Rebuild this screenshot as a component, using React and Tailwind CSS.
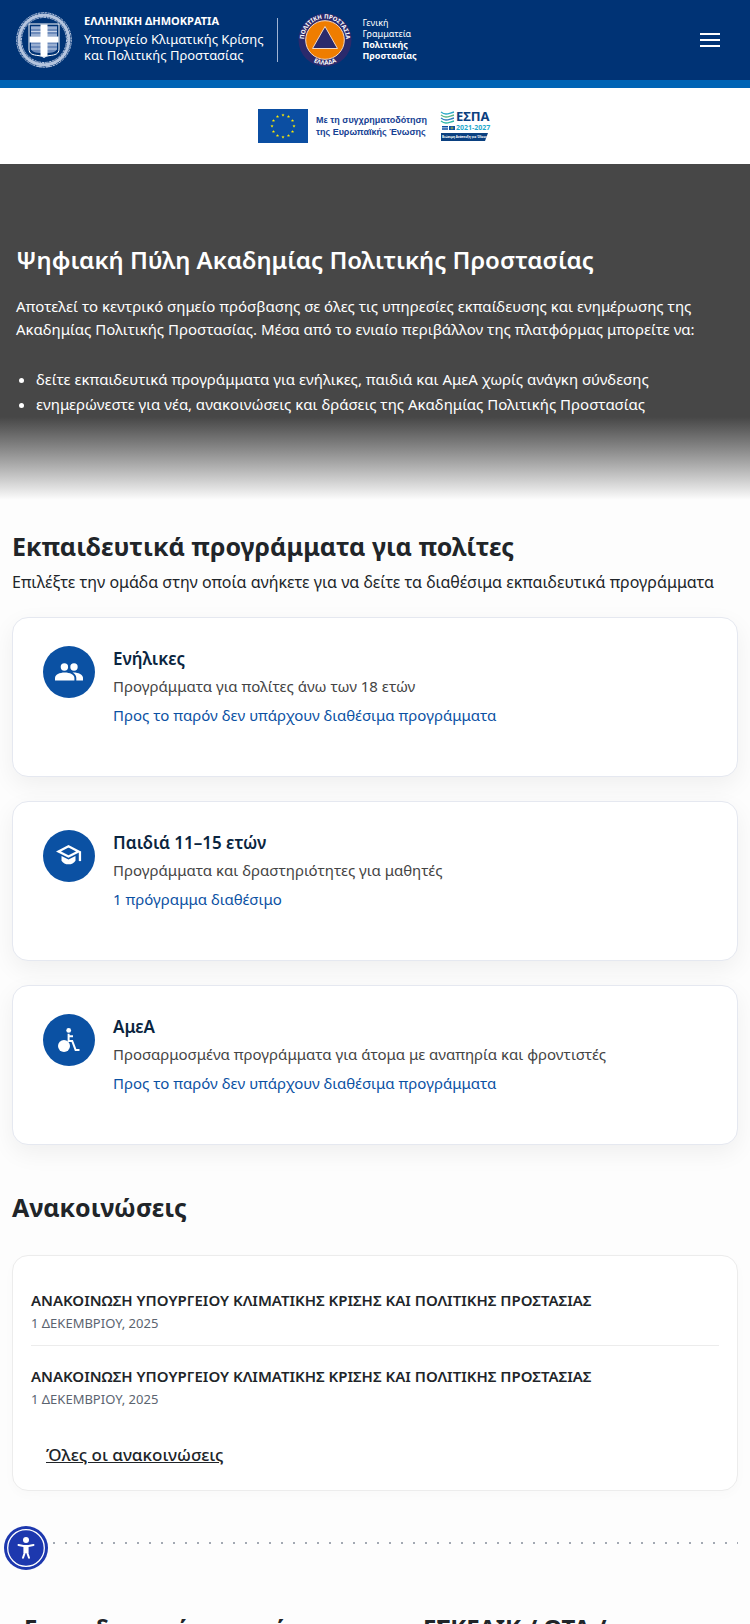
import { useState } from "react"

const groups = [
    { title: "Ενήλικες", text: "Προγράμματα για πολίτες άνω των 18 ετών", link: "Προς το παρόν δεν υπάρχουν διαθέσιμα προγράμματα", icon: <PeopleIcon /> },
    { title: "Παιδιά 11–15 ετών", text: "Προγράμματα και δραστηριότητες για μαθητές", link: "1 πρόγραμμα διαθέσιμο", icon: <SchoolIcon /> },
    { title: "ΑμεΑ", text: "Προσαρμοσμένα προγράμματα για άτομα με αναπηρία και φροντιστές", link: "Προς το παρόν δεν υπάρχουν διαθέσιμα προγράμματα", icon: <WheelchairIcon /> },
]

const news = [
    { id: 1, title: "ΑΝΑΚΟΙΝΩΣΗ ΥΠΟΥΡΓΕΙΟΥ ΚΛΙΜΑΤΙΚΗΣ ΚΡΙΣΗΣ ΚΑΙ ΠΟΛΙΤΙΚΗΣ ΠΡΟΣΤΑΣΙΑΣ", date: "1 ΔΕΚΕΜΒΡΙΟΥ, 2025" },
    { id: 2, title: "ΑΝΑΚΟΙΝΩΣΗ ΥΠΟΥΡΓΕΙΟΥ ΚΛΙΜΑΤΙΚΗΣ ΚΡΙΣΗΣ ΚΑΙ ΠΟΛΙΤΙΚΗΣ ΠΡΟΣΤΑΣΙΑΣ", date: "1 ΔΕΚΕΜΒΡΙΟΥ, 2025" },
]

function PeopleIcon() {
    return (
        <svg viewBox="0 0 28 18" className="h-[18px] w-7" fill="currentColor" aria-hidden="true">
            <circle cx="9.4" cy="4" r="3.7" />
            <circle cx="19" cy="4" r="3.7" />
            <path d="M0 17.5V15c0-3.2 4.5-5.4 9.7-5.400s9.7 2.200 9.7 5.400v2.500z" />
            <path d="M17.5 9.600C23 9.300 28 11.600 28 14.800v2.700h-6.700V15c0-2.200-1.500-4.200-3.800-5.400z" />
        </svg>
    )
}

function SchoolIcon() {
    return (
        <svg viewBox="0 0 26 26" className="size-[26px]" fill="currentColor" aria-hidden="true">
            <path d="M2.5 8.5L12.5 3.2l10 5.3-10 5z" fill="none" stroke="currentColor" strokeWidth="2.3" />
            <path d="M5.5 13l7 3.500 7-3.500v4.700c-1.500 2.500-4 3.600-7 3.600s-5.500-1.100-7-3.600z" />
            <path d="M22.800 8.300h2.300v9.800h-2.300z" />
        </svg>
    )
}

function WheelchairIcon() {
    return (
        <svg viewBox="0 0 22 24" className="h-6 w-[22px]" fill="none" stroke="currentColor" strokeWidth="2" aria-hidden="true">
            <circle cx="10.7" cy="2.4" r="2.4" fill="currentColor" stroke="none" />
            <circle cx="6" cy="18" r="6" fill="currentColor" stroke="none" />
            <path d="M10.6 5.8v8M10.6 8.2H15M9.7 12.9h4.5l3.4 9H21.5" />
        </svg>
    )
}

function Emblem() {
    return (
        <svg viewBox="0 0 56 56" className="size-14 shrink-0" fill="none" aria-hidden="true">
            <g stroke="#b4c4de" strokeLinecap="round">
                <circle cx="28" cy="28" r="24.8" strokeWidth="3.5" strokeDasharray=".6 2.4" />
                <circle cx="28" cy="28" r="27.3" strokeWidth="1" strokeDasharray="2 1.5" />
                <circle cx="28" cy="28" r="22.5" strokeWidth="1" strokeDasharray="2 1.5" />
                <path d="M19 51.5c5-2 9 3 15 3M37 51.5c-5-2-9 3-15 3" strokeWidth="1.2" />
            </g>
            <path d="M13 12h30v25c0 5-4 6-9 6.5-3 .4-4.5 1-6 2-1.5-1-3-1.6-6-2-5-.5-9-1.5-9-6.5z" fill="#003375" stroke="#fff" strokeWidth="1" />
            <path d="M15 14h10v11H15zM31 14h10v11H31zM15 30h10v11c-5 0-10-1-10-5zM31 30h10v6c0 4-5 5-10 5z" fill="#6d8bbb" />
            <path d="M15 16h10M15 19.5h10M15 23h10M31 16h10M31 19.5h10M31 23h10M15 33h10M15 37h10M31 33h10M31 37h10" stroke="#c6d3e8" />
            <path d="M24.5 12.5h7v12h11v6h-11v13.5l-3.5 1-3.5-1V30.5h-11v-6h11z" fill="#fff" />
        </svg>
    )
}

function CivilProtectionBadge() {
    return (
        <svg viewBox="0 0 54 54" className="size-[54px] shrink-0 overflow-visible" aria-hidden="true">
            <defs>
                <path id="ring-top" d="M7.9 35A20.900 20.900 0 1 1 46.100 35" />
                <path id="ring-bottom" d="M9.5 44.5A24.800 24.800 0 0 0 44.500 44.500" />
            </defs>
            <circle cx="27" cy="27" r="26.5" fill="#2b2a6c" />
            <circle cx="27" cy="27" r="19.3" fill="#ef7d00" stroke="#f3d9c5" strokeWidth="1" />
            <path d="M27 13.5l12.5 22h-25z" fill="#2b2a6c" stroke="#f3d9c5" />
            <g fill="#fff" fontFamily="Noto Sans, sans-serif" fontWeight="700" fontSize="6">
                <text textAnchor="middle"><textPath href="#ring-top" startOffset="50%">ΠΟΛΙΤΙΚΗ ΠΡΟΣΤΑΣΙΑ</textPath></text>
                <text textAnchor="middle"><textPath href="#ring-bottom" startOffset="50%">ΕΛΛΑΔΑ</textPath></text>
            </g>
        </svg>
    )
}

function EuFlag() {
    const stars = Array.from({ length: 12 }, (_, i) => {
        const a = (i * Math.PI) / 6
        return [25 + 11 * Math.sin(a), 17 - 11 * Math.cos(a)]
    })
    return (
        <svg viewBox="0 0 50 34" className="h-[34px] w-[50px] shrink-0" aria-hidden="true">
            <path d="M0 0h50v34H0z" fill="#0b4ea2" />
            {stars.map(([x, y], i) => (
                <path key={i} transform={`translate(${x} ${y}) scale(.8)`} fill="#ffed00" d="M0-2l.5 1.4h1.5L.8.3l.5 1.5L0 .9l-1.3.9.5-1.5L-2-.6h1.5z" />
            ))}
        </svg>
    )
}

function EspaLogo() {
    return (
        <svg viewBox="0 0 51 32" className="h-8 w-[51px] shrink-0 overflow-visible" aria-hidden="true">
            <g fill="none" strokeWidth="1.3">
                <path d="M0 2c5 4 8 1 13 0" stroke="#2aa9c9" />
                <path d="M0 5c5 4 8 1 13 0" stroke="#5ab78a" />
                <path d="M0 8c5 4 8 1 13 0" stroke="#2f7fc1" />
                <path d="M0 11c5 4 8 1 13 0" stroke="#2fb8a8" />
            </g>
            <path d="M1 16h6v4H1zM8 16h6v4H8z" fill="#0b4ea2" />
            <path d="M1 17.5h6M1 19h6" stroke="#fff" strokeWidth=".5" />
            <circle cx="11" cy="18" r="1" fill="none" stroke="#ffed00" strokeWidth=".5" />
            <path d="M0 23h47l-3 8H0z" fill="#0a4080" />
            <g fontFamily="Noto Sans, sans-serif" fontWeight="700">
                <text x="15" y="11" fontSize="13" fill="#0b4080">ΕΣΠΑ</text>
                <text x="15" y="20" fontSize="7" fill="#1fa9cc">2021-2027</text>
                <text x="1" y="28" fontSize="3" fill="#fff">Βιώσιμη Ανάπτυξη για Όλους</text>
            </g>
        </svg>
    )
}

function AccessibilityIcon() {
    return (
        <svg viewBox="0 0 44 44" className="size-11" aria-hidden="true">
            <circle cx="22" cy="22" r="22" fill="#1d38ae" />
            <circle cx="22" cy="22" r="18.3" fill="none" stroke="#fff" strokeWidth="1.3" />
            <circle cx="22" cy="14" r="3" fill="#fff" />
            <path d="M14.5 19l5 1h5l5-1M20.8 21v5.500l-1.800 5.300M23.200 21v5.500l1.800 5.300" fill="none" stroke="#fff" strokeWidth="2" strokeLinecap="round" />
            <path d="M19.5 19.5h5v7.5h-5z" fill="#fff" />
        </svg>
    )
}

function Header({ open, onToggle }) {
    return (
        <header className="flex h-[88px] items-center justify-between border-b-8 border-[#0063b4] bg-[#003375] pr-[30px] pl-4 text-white">
            <a href="#" className="flex items-center">
                <Emblem />
                <span className="ml-3 flex flex-col pb-1 text-[13px] leading-4">
                    <strong className="mb-0.5 text-[11px]">ΕΛΛΗΝΙΚΗ ΔΗΜΟΚΡΑΤΙΑ</strong>
                    <span>Υπουργείο Κλιματικής Κρίσης</span>
                    <span>και Πολιτικής Προστασίας</span>
                </span>
                <span className="ml-3.5 h-11 w-px bg-[#9fb4d4]" />
                <span className="ml-5"><CivilProtectionBadge /></span>
                <span className="ml-2.5 flex flex-col pb-0.5 text-[9px] leading-[11px]">
                    <span>Γενική</span>
                    <span>Γραμματεία</span>
                    <strong>Πολιτικής</strong>
                    <strong>Προστασίας</strong>
                </span>
            </a>
            <button type="button" aria-label="Μενού" aria-expanded={open} onClick={onToggle} className="flex w-5 flex-col gap-1">
                <span className="h-0.5 bg-white" />
                <span className="h-0.5 bg-white" />
                <span className="h-0.5 bg-white" />
            </button>
        </header>
    )
}

export default function App() {
    const [open, setOpen] = useState(false)

    return (
        <div className="h-screen overflow-hidden bg-[#fdfdfd] font-['Noto_Sans',sans-serif] text-[#212529]">
            <Header open={open} onToggle={() => setOpen(!open)} />

            <div className="flex h-[76px] items-center justify-center gap-3.5 bg-white">
                <div className="flex items-center gap-2">
                    <EuFlag />
                    <p className="font-['Liberation_Sans',sans-serif] text-[9px] leading-3 font-bold text-[#164194]">
                        Με τη συγχρηματοδότηση<br />της Ευρωπαϊκής Ένωσης
                    </p>
                </div>
                <EspaLogo />
            </div>

            <section className="bg-[#474747] px-4 pt-20 text-white">
                <h1 className="text-2xl leading-8 font-semibold">Ψηφιακή Πύλη Ακαδημίας Πολιτικής Προστασίας</h1>
                <p className="mt-[19px] text-[15px] leading-[23px]">
                    Αποτελεί το κεντρικό σημείο πρόσβασης σε όλες τις υπηρεσίες εκπαίδευσης και ενημέρωσης της Ακαδημίας Πολιτικής Προστασίας. Μέσα από το ενιαίο περιβάλλον της πλατφόρμας μπορείτε να:
                </p>
                <ul className="mt-[26px] list-disc pl-5 text-[15px] leading-[25px]">
                    <li>δείτε εκπαιδευτικά προγράμματα για ενήλικες, παιδιά και ΑμεΑ χωρίς ανάγκη σύνδεσης</li>
                    <li>ενημερώνεστε για νέα, ανακοινώσεις και δράσεις της Ακαδημίας Πολιτικής Προστασίας</li>
                </ul>
            </section>
            <div className="h-[83px] bg-linear-to-b from-[#474747] to-[#fdfdfd]" />

            <main className="px-3">
                <section className="pt-[30px]">
                    <h2 className="text-[25px] leading-8 font-bold">Εκπαιδευτικά προγράμματα για πολίτες</h2>
                    <p className="mt-2 text-base leading-6">Επιλέξτε την ομάδα στην οποία ανήκετε για να δείτε τα διαθέσιμα εκπαιδευτικά προγράμματα</p>
                    <div className="mt-[23px] flex flex-col gap-6">
                        {groups.map((g) => (
                            <article key={g.title} className="flex h-40 gap-[18px] rounded-2xl border border-[#e5e8f0] bg-white px-[30px] pt-7 shadow-[0_8px_24px_rgba(0,0,0,0.06)]">
                                <span className="flex size-[52px] shrink-0 items-center justify-center rounded-full bg-[#0b51a3] text-white">{g.icon}</span>
                                <div>
                                    <h3 className="text-[17px] leading-[26px] font-semibold text-[#0a2540]">{g.title}</h3>
                                    <p className="mt-0.5 text-[15px] leading-6 text-[#444]">{g.text}</p>
                                    <a href="#" className="mt-[5px] block text-[15px] leading-6 text-[#0b51a3]">{g.link}</a>
                                </div>
                            </article>
                        ))}
                    </div>
                </section>

                <section className="mt-[46px]">
                    <h2 className="text-[25px] leading-8 font-bold">Ανακοινώσεις</h2>
                    <div className="mt-8 rounded-2xl border border-[#ececec] bg-white px-[18px] pt-3.5 pb-[23px] shadow-[0_4px_12px_rgba(0,0,0,0.02)]">
                        <ul className="divide-y divide-[#ececec]">
                            {news.map((n) => (
                                <li key={n.id} className="pt-[17px] pb-3">
                                    <a href="#" className="block text-[15px] leading-[26px] font-semibold">{n.title}</a>
                                    <p className="text-[13px] leading-5 text-[#5b6470]">{n.date}</p>
                                </li>
                            ))}
                        </ul>
                        <a href="#" className="mt-[22px] ml-[15px] block w-fit text-[17px] leading-6 font-medium underline">Όλες οι ανακοινώσεις</a>
                    </div>
                </section>

                <div className="mt-[51px] h-0.5 bg-[repeating-linear-gradient(to_right,transparent_0_5px,#a3a9b3_5px_7px,transparent_7px_12px)]" />

                <section className="mt-[68px] grid grid-cols-2 px-3">
                    <h2 className="text-2xl leading-8 font-bold">Εκπαιδευτικά προγράμματα</h2>
                    <h2 className="pl-12 text-2xl leading-8 font-bold">ΕΣΚΕΔΙΚ / ΟΤΑ /</h2>
                </section>
            </main>

            <button type="button" aria-label="Προσβασιμότητα" className="fixed bottom-[54px] left-1">
                <AccessibilityIcon />
            </button>
        </div>
    )
}
